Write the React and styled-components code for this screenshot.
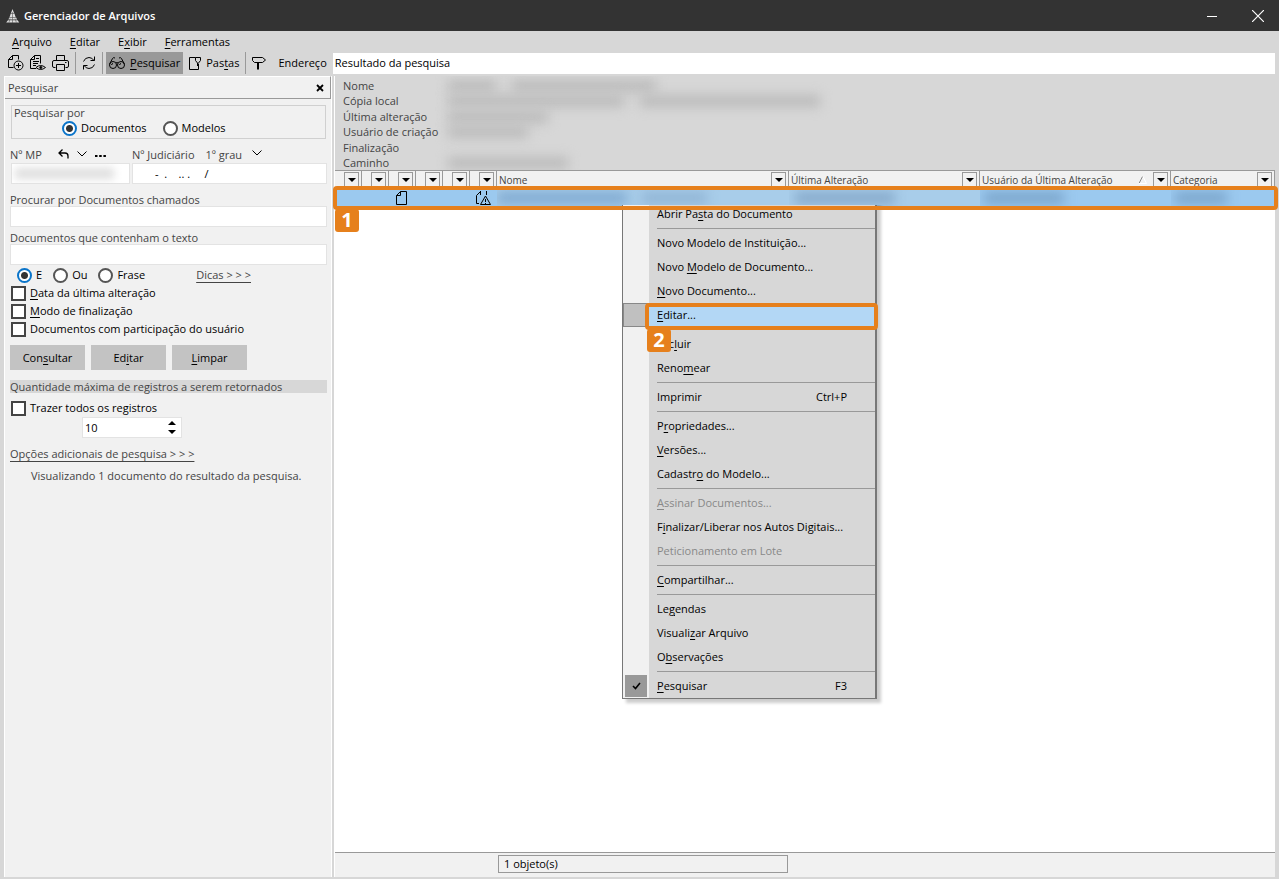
import { useState } from "react";
import styled, { createGlobalStyle, css } from "styled-components";

const GlobalStyle = createGlobalStyle`
    * {
        box-sizing: border-box;
    }
    body {
        margin: 0;
        background-color: #d7d7d7;
        font-family: "Open Sans", "Noto Sans", sans-serif;
        font-size: 11px;
        line-height: 16px;
        color: #000;
    }
    button, input, select {
        font: inherit;
        color: inherit;
        margin: 0;
        padding: 0;
        border: none;
        border-radius: 0;
        background: none;
    }
    u {
        text-underline-offset: 2px;
    }
`;

const Window = styled.div`
    min-height: 100vh;
    display: flex;
    flex-direction: column;
    background-color: #d7d7d7;
`;

/* title bar */
const TitleBar = styled.header`
    height: 31px;
    display: flex;
    align-items: center;
    padding: 0 12px 0 6px;
    background-color: #333;
    color: #fff;
`;
const Title = styled.h1`
    flex: 1;
    margin: 0 0 0 4px;
    font-size: 11px;
    font-weight: 600;
`;
const WindowButton = styled.button`
    width: 18px;
    height: 18px;
    margin-left: 28px;
    display: flex;
    align-items: center;
    justify-content: center;
`;

/* menu bar and tool bar */
const MenuBar = styled.nav`
    height: 21px;
    display: flex;
    align-items: center;
    gap: 18px;
    padding: 0 12px;
`;
const MenuButton = styled.button`
    height: 18px;
`;
const ToolBar = styled.div`
    height: 24px;
    display: flex;
    align-items: flex-start;
    padding: 0 4px 0 5px;
`;
const ToolButton = styled.button`
    height: 22px;
    display: flex;
    align-items: center;
    gap: 5px;
    padding: 0 3px 0 ${(props) => (props.$spaced ? 6 : 3)}px;
    background-color: ${(props) => (props.$active ? "#999" : "transparent")};
`;
const Separator = styled.div`
    width: 1px;
    height: 22px;
    margin: 0 3px;
    background-color: #999;
`;
const AddressLabel = styled.label`
    flex: 1;
    display: flex;
    align-items: center;
    gap: 6px;
    padding-left: 9px;
    height: 22px;
`;
const AddressInput = styled.input`
    flex: 1;
    min-width: 0;
    height: 21px;
    padding: 0 0 2px 2px;
    background-color: #fff;
`;

const Body = styled.div`
    flex: 1;
    display: flex;
    gap: 2px;
    padding: 0 4px 2px;
`;

/* search panel */
const Sidebar = styled.aside`
    width: 328px;
    flex-shrink: 0;
    display: flex;
    flex-direction: column;
    background-color: #f1f1f1;
    border-left: 1px solid #fff;
    border-right: 1px solid #fff;
`;
const SidebarHeader = styled.div`
    height: 23px;
    display: flex;
    align-items: center;
    justify-content: space-between;
    padding: 0 5px 0 3px;
    color: #444;
    border-top: 1px solid #fff;
    border-right: 1px solid #999;
    border-bottom: 1px solid #999;
`;
const CloseButton = styled.button`
    display: flex;
    padding: 1px;
`;
const SearchForm = styled.form`
    padding: 6px 4px 0 5px;
`;
const Group = styled.div`
    height: 34px;
    margin: 0 1px;
    padding-left: 2px;
    border: 1px solid #d0d0d0;
    color: #444;
`;
const GroupTitle = styled.div`
    height: 14px;
    line-height: 14px;
`;
const RadioRow = styled.div`
    display: flex;
    align-items: center;
    gap: ${(props) => props.$gap}px;
    padding-left: ${(props) => props.$indent}px;
`;
const RadioLabel = styled.label`
    display: flex;
    align-items: center;
    gap: 4px;
    color: #000;
`;
const Radio = styled.input.attrs({ type: "radio" })`
    appearance: none;
    width: 15px;
    height: 15px;
    border: 2px solid #555;
    border-radius: 50%;
    background-color: #fff;

    &:checked {
        border-color: #0a74c9;
        background: radial-gradient(circle, #333 3px, #fff 4px);
    }
`;
const CheckLabel = styled.label`
    height: 18px;
    display: flex;
    align-items: center;
    gap: 4px;
    padding-left: 1px;
`;
const Checkbox = styled.input.attrs({ type: "checkbox" })`
    appearance: none;
    width: 15px;
    height: 15px;
    border: 2px solid #444;
    background-color: #fff;

    &:checked {
        background-color: #444;
    }
`;
const NumberLabels = styled.div`
    display: flex;
    height: 16px;
    margin-top: 8px;
    color: #444;
`;
const NumberTools = styled.div`
    display: flex;
    align-items: center;
    gap: 8px;
    width: 74px;
    height: 14px;
`;
const IconButton = styled.button`
    display: flex;
`;
const DegreeSelect = styled.div`
    display: flex;
    align-items: flex-start;
    margin-left: 11px;

    select {
        appearance: none;
        width: 46px;
        height: 16px;
    }
    svg {
        margin-top: 3px;
    }
`;
const LabelText = styled.label`
    width: ${(props) => (props.$width ? props.$width + "px" : "auto")};
    height: 14px;
    display: block;
    color: #444;
`;
const NumberFields = styled.div`
    display: grid;
    grid-template-columns: 119px 1fr;
    gap: 2px;
    padding-left: 1px;
`;
const TextInput = styled.input`
    width: 100%;
    height: 21px;
    display: block;
    padding: 0 ${(props) => props.$indent || 2}px;
    background-color: #fff;
    border: 1px solid #e3e3e3;
    white-space: pre;
`;
const BlurredField = styled.div`
    position: relative;
    overflow: hidden;
`;
const FieldSmudge = styled.div`
    position: absolute;
    top: 5px;
    left: 4px;
    right: 16px;
    height: 11px;
    background-color: #dedede;
    filter: blur(4px);
`;
const Field = styled.div`
    margin-top: ${(props) => props.$top}px;
`;
const MatchRow = styled.div`
    display: flex;
    align-items: center;
    justify-content: space-between;
    height: 18px;
    margin-top: 1px;
    padding-right: 76px;
`;
const Link = styled.a`
    color: #444;
    text-underline-offset: 3px;
    text-decoration: underline;
`;
const Buttons = styled.div`
    display: flex;
    gap: 6px;
    margin: 7px 0 10px;
`;
const Button = styled.button`
    width: 75px;
    height: 25px;
    background-color: #c3c3c3;
`;
const SectionTitle = styled.div`
    height: 13px;
    line-height: 13px;
    margin-bottom: 6px;
    background-color: #d7d7d7;
    color: #444;
`;
const Spinner = styled.div`
    display: flex;
    align-items: center;
    width: 100px;
    height: 21px;
    margin-left: 72px;
    padding: 0 5px 0 2px;
    background-color: #fff;
    border: 1px solid #e3e3e3;

    input {
        flex: 1;
        min-width: 0;
        appearance: textfield;
    }
    input::-webkit-inner-spin-button {
        appearance: none;
    }
`;
const SpinButtons = styled.div`
    display: flex;
    flex-direction: column;
    gap: 5px;
`;
const Status = styled.p`
    margin: 6px 0 0 21px;
    color: #444;
`;

/* results */
const Results = styled.main`
    position: relative;
    flex: 1;
    min-width: 0;
    display: flex;
    flex-direction: column;
    border-left: 1px solid #fff;
    background-color: #fff;
`;
const Details = styled.dl`
    margin: 0;
    height: 94px;
    padding: 2px 8px 0;
    display: grid;
    grid-template-columns: 105px 1fr;
    grid-auto-rows: 15px 16px;
    line-height: 16px;
    background-color: #d7d7d7;
    color: #444;
    overflow: hidden;

    dd {
        margin: 0;
        display: flex;
        align-items: center;
        gap: 16px;
    }
`;
const Smudge = styled.span`
    width: ${(props) => props.$width}px;
    height: 12px;
    margin-left: ${(props) => props.$left || 0}px;
    background-color: ${(props) => props.$color || "#bbb"};
    filter: blur(6px);
`;
const Table = styled.table`
    width: 100%;
    table-layout: fixed;
    border-collapse: collapse;
    border-top: 1px solid #999;

    th, td {
        padding: 0;
        text-align: left;
        font-weight: 400;
    }
    th {
        height: 17px;
        color: #444;
        font-size: 10px;
        background-color: #f1f1f1;
        vertical-align: top;
    }
    td {
        height: 19px;
        background-color: #9bc9ef;
    }
`;
const HeaderCell = styled.div`
    display: flex;
    align-items: flex-start;
    height: 17px;
    padding: 1px 2px 0;
    border-right: 1px solid #999;

    span {
        flex: 1;
        min-width: 0;
        white-space: nowrap;
    }
`;
const FilterButton = styled.button`
    width: 15px;
    height: 16px;
    display: flex;
    align-items: center;
    justify-content: center;
    border: 1px solid #999;
    flex-shrink: 0;
`;
const SortMark = styled.svg`
    margin: 4px 6px 0 0;
`;
const CellContent = styled.div`
    display: flex;
    align-items: center;
    height: 19px;
    overflow: hidden;
    padding-left: ${(props) => props.$indent || 0}px;
    background-color: ${(props) => (props.$hazy ? "#a8cdea" : "transparent")};
`;
const FooterBar = styled.footer`
    margin-top: auto;
    height: 25px;
    display: flex;
    align-items: flex-start;
    padding: 2px 0 0 163px;
    background-color: #f1f1f1;
    border-top: 1px solid #999;
`;
const ObjectCount = styled.div`
    width: 290px;
    height: 18px;
    padding-left: 5px;
    border: 1px solid #999;
`;

/* context menu, its top edge tucked under the selected row */
const ContextMenu = styled.div`
    position: absolute;
    top: 125px;
    left: 287px;
    width: 255px;
    border: 1px solid #777;
    border-right-width: 2px;
    background: linear-gradient(to right, #f1f1f1 26px, #d7d7d7 26px);
    box-shadow: 4px 4px 3px rgba(0, 0, 0, 0.2);
    clip-path: inset(4px -8px -8px 0);
`;
const MenuItem = styled.button`
    width: 100%;
    height: 24px;
    display: flex;
    align-items: center;
    padding: 0 28px 0 2px;
    text-align: left;

    &:disabled {
        color: #888;
    }
    ${(props) =>
        props.$highlighted &&
        css`
            background: linear-gradient(to right, #c0c0c0 26px, #b3d7f5 26px);
            outline: 1px solid #888;
            outline-offset: -1px;
        `}
`;
const ItemMark = styled.span`
    width: 22px;
    height: 22px;
    margin-right: 10px;
    display: flex;
    align-items: center;
    justify-content: center;
    background-color: ${(props) => (props.$checked ? "#999" : "transparent")};
`;
const ItemLabel = styled.span`
    flex: 1;
`;
const Divider = styled.div`
    height: 5px;
    margin-left: 34px;
    background: linear-gradient(#999, #999) 0 2px / 100% 1px no-repeat;
`;

/* numbered callouts */
const Callout = styled.div`
    position: absolute;
    border: 4px solid #e6801c;
    border-radius: 4px;
    pointer-events: none;
`;
const RowCallout = styled(Callout)`
    top: 110px;
    left: -2px;
    right: -3px;
    height: 24px;
`;
const ItemCallout = styled(Callout)`
    top: 101px;
    left: 22px;
    right: -3px;
    height: 27px;
`;
const Badge = styled.span`
    position: absolute;
    top: calc(100% + 3px);
    left: -2px;
    width: 24px;
    height: 23px;
    line-height: 22px;
    border-radius: 3px;
    background-color: #e6801c;
    color: #fff;
    font-size: 20px;
    font-weight: 700;
    text-align: center;
`;

const Icon = ({ width = 16, height = 16, children }) => (
    <svg
        width={width}
        height={height}
        viewBox={`0 0 ${width} ${height}`}
        fill="none"
        stroke="#000"
        aria-hidden="true"
    >
        {children}
    </svg>
);

const Logo = () => (
    <svg width="14" height="14" viewBox="0 0 14 14" aria-hidden="true">
        <path d="M6.5 0 8 4H5zM4.8 4.6h3.6L9.6 8H3.6zM3.3 8.6h6.8l1 2H2.4zM2 11.2h9.6l1.6 2.3H.2z" fill="#e0e0e0" />
        <path d="M6.5 3v11M4 9.5l-1 4M9 9.5l1.4 4" stroke="#555" strokeWidth=".6" />
    </svg>
);

const FileAddIcon = () => (
    <Icon>
        <path d="M5.5 12.5h-5v-8l4-4h6v4M4.5.5v4h-4" />
        <circle cx="10.5" cy="10.5" r="4.5" />
        <path d="M8 10.5h5M10.5 8v5" />
    </Icon>
);
const FileViewIcon = () => (
    <Icon>
        <path d="M6 13.5H.5v-9l4-4h6v8M4.5.5v4h-4M6 3.5h3M3 6.5h6M3 8.5h5M3 10.5h3" />
        <path d="M6 12.5q4.5-4 9.5 0-5 4-9.5 0z" />
        <circle cx="10.8" cy="12.5" r="1" fill="#000" />
    </Icon>
);
const PrinterIcon = () => (
    <Icon width={17}>
        <path d="M4.5 5V.5h8V5M3.5 12.5H2Q.5 12.500.5 11V7Q.5 5.500 2 5.500h13q1.500 0 1.500 1.500v4q0 1.500-1.500 1.500h-1.500" />
        <path d="M4.5 9.5h8v6h-8zM13 7.500h1.500" />
    </Icon>
);
const RefreshIcon = () => (
    <Icon width={14} height={14}>
        <path d="M1.5 5.5Q3 1.5 7 1.5q3 0 5 3M12.5.5v4h-4M12.5 8.5Q11 12.5 7 12.5q-3 0-5-3M1.5 13.5v-4h4" />
    </Icon>
);
const BinocularsIcon = () => (
    <Icon width={16} height={14}>
        <circle cx="4" cy="9" r="3.5" />
        <circle cx="12" cy="9" r="3.5" />
        <path d="M.7 8 3.5 2.500Q4.500 1 6 2M15.300 8 12.500 2.500Q11.500 1 10 2M7 7q1-1 2 0M2.500 9q.2-1.300 1.500-1.500M10.500 9q.2-1.300 1.500-1.500" />
    </Icon>
);
const FoldersIcon = () => (
    <Icon width={12} height={13}>
        <path d="M6.5.5h-6v12h9v-6M6.5.5v3l2 2.5v3M6.5.5h5v3l-2 2.500" />
    </Icon>
);
const SignIcon = () => (
    <Icon width={14} height={14}>
        <path d="M.5 1.5h10l3 2.5-3 2.5h-8l-2-2zM5.5 6.5v7M6.5 6.5v7" />
    </Icon>
);
const UndoIcon = () => (
    <Icon width={11} height={10}>
        <path d="M4.5.5 1 4l3.5 3.5M1 4h6q3 0 3 3v2.5" strokeWidth="1.3" />
    </Icon>
);
const ChevronIcon = () => (
    <Icon width={10} height={6}>
        <path d="M.5.5 5 5 9.5.5" />
    </Icon>
);
const ArrowIcon = ({ up }) => (
    <svg width="8" height="4" viewBox="0 0 8 4" aria-hidden="true">
        <path d={up ? "M0 4h8L4 0z" : "M0 0h8L4 4z"} />
    </svg>
);

// "&" marks the access key of a caption
const Caption = ({ text }) => {
    const [before, after] = text.split("&");
    if (after === undefined) return text;
    return (
        <>
            {before}
            <u>{after[0]}</u>
            {after.slice(1)}
        </>
    );
};

const contextItems = [
    { text: "Abrir Pa&sta do Documento" },
    null,
    { text: "Novo Modelo de Instituição..." },
    { text: "Novo &Modelo de Documento..." },
    { text: "&Novo Documento..." },
    { text: "&Editar...", highlighted: true },
    null,
    { text: "Exc&luir" },
    { text: "Reno&mear" },
    null,
    { text: "Imprimir", shortcut: "Ctrl+P" },
    null,
    { text: "P&ropriedades..." },
    { text: "&Versões..." },
    { text: "Cadastr&o do Modelo..." },
    null,
    { text: "&Assinar Documentos...", disabled: true },
    { text: "F&inalizar/Liberar nos Autos Digitais..." },
    { text: "Peticionamento em Lote", disabled: true },
    null,
    { text: "&Compartilhar..." },
    null,
    { text: "Le&gendas" },
    { text: "Visuali&zar Arquivo" },
    { text: "O&bservações" },
    null,
    { text: "&Pesquisar", shortcut: "F3", checked: true },
];

const details = [
    { label: "Nome", smudges: [48, 144] },
    { label: "Cópia local", smudges: [176, 180] },
    { label: "Última alteração", smudges: [100] },
    { label: "Usuário de criação", smudges: [80] },
    { label: "Finalização", smudges: [] },
    { label: "Caminho", smudges: [120] },
];

const columns = [
    { width: 27 },
    { width: 27 },
    { width: 27 },
    { width: 27 },
    { width: 27 },
    { width: 27 },
    { title: "Nome", width: 292 },
    { title: "Última Alteração", width: 191 },
    { title: "Usuário da Última Alteração", width: 191, sorted: true },
    { title: "Categoria" },
];

const filters = ["&Data da última alteração", "&Modo de finalização", "Documentos com participação do usuário"];

const SearchPanel = () => {
    const [kind, setKind] = useState("Documentos");
    const [match, setMatch] = useState("E");
    const [limit, setLimit] = useState(10);

    return (
        <Sidebar>
            <SidebarHeader>
                Pesquisar
                <CloseButton aria-label="Fechar painel">
                    <Icon width={8} height={8}>
                        <path d="M1 1l6 6M7 1 1 7" strokeWidth="1.8" />
                    </Icon>
                </CloseButton>
            </SidebarHeader>
            <SearchForm onSubmit={(e) => e.preventDefault()}>
                <Group>
                    <GroupTitle>Pesquisar por</GroupTitle>
                    <RadioRow $gap={16} $indent={48}>
                        {["Documentos", "Modelos"].map((name) => (
                            <RadioLabel key={name}>
                                <Radio name="kind" checked={kind === name} onChange={() => setKind(name)} />
                                {name}
                            </RadioLabel>
                        ))}
                    </RadioRow>
                </Group>
                <NumberLabels>
                    <LabelText htmlFor="mp" $width={48}>Nº MP</LabelText>
                    <NumberTools>
                        <IconButton type="button" aria-label="Desfazer"><UndoIcon /></IconButton>
                        <IconButton type="button" aria-label="Recentes"><ChevronIcon /></IconButton>
                        <IconButton type="button" aria-label="Mais">
                            <Icon width={11} height={10}>
                                <path d="M0 7h2.500M4.200 7h2.500M8.400 7h2.500" strokeWidth="2" />
                            </Icon>
                        </IconButton>
                    </NumberTools>
                    <LabelText htmlFor="judicial">Nº Judiciário</LabelText>
                    <DegreeSelect>
                        <select aria-label="Grau">
                            <option>1º grau</option>
                        </select>
                        <ChevronIcon />
                    </DegreeSelect>
                </NumberLabels>
                <NumberFields>
                    <BlurredField>
                        <TextInput id="mp" />
                        <FieldSmudge />
                    </BlurredField>
                    <TextInput id="judicial" $indent={22} defaultValue="-  .    .. .     /" />
                </NumberFields>
                <Field $top={8}>
                    <LabelText htmlFor="called">Procurar por Documentos chamados</LabelText>
                    <TextInput id="called" />
                </Field>
                <Field $top={3}>
                    <LabelText htmlFor="contains">Documentos que contenham o texto</LabelText>
                    <TextInput id="contains" />
                </Field>
                <MatchRow>
                    <RadioRow $gap={11} $indent={7}>
                        {["E", "Ou", "Frase"].map((name) => (
                            <RadioLabel key={name}>
                                <Radio name="match" checked={match === name} onChange={() => setMatch(name)} />
                                {name}
                            </RadioLabel>
                        ))}
                    </RadioRow>
                    <Link href="#dicas">Dicas &gt; &gt; &gt;</Link>
                </MatchRow>
                {filters.map((name) => (
                    <CheckLabel key={name}>
                        <Checkbox />
                        <span><Caption text={name} /></span>
                    </CheckLabel>
                ))}
                <Buttons>
                    <Button type="submit"><Caption text="Con&sultar" /></Button>
                    <Button type="button"><Caption text="Ed&itar" /></Button>
                    <Button type="reset"><Caption text="&Limpar" /></Button>
                </Buttons>
                <SectionTitle>Quantidade máxima de registros a serem retornados</SectionTitle>
                <CheckLabel>
                    <Checkbox />
                    Trazer todos os registros
                </CheckLabel>
                <Spinner>
                    <input
                        type="number"
                        aria-label="Quantidade"
                        value={limit}
                        onChange={(e) => setLimit(Number(e.target.value))}
                    />
                    <SpinButtons>
                        <IconButton type="button" aria-label="Aumentar" onClick={() => setLimit(limit + 1)}>
                            <ArrowIcon up />
                        </IconButton>
                        <IconButton type="button" aria-label="Diminuir" onClick={() => setLimit(limit - 1)}>
                            <ArrowIcon />
                        </IconButton>
                    </SpinButtons>
                </Spinner>
                <Field $top={8}>
                    <Link href="#opcoes">Opções adicionais de pesquisa &gt; &gt; &gt;</Link>
                </Field>
                <Status>Visualizando 1 documento do resultado da pesquisa.</Status>
            </SearchForm>
        </Sidebar>
    );
};

const DetailRow = ({ label, smudges }) => (
    <>
        <dt>{label}</dt>
        <dd>
            {smudges.map((width, i) => (
                <Smudge key={i} $width={width} />
            ))}
        </dd>
    </>
);

const ResultTable = () => (
    <Table>
        <colgroup>
            {columns.map((column, i) => (
                <col key={i} width={column.width} />
            ))}
        </colgroup>
        <thead>
            <tr>
                {columns.map((column, i) => (
                    <th key={i}>
                        <HeaderCell>
                            <span>{column.title}</span>
                            {column.sorted && (
                                <SortMark width="8" height="8" viewBox="0 0 8 8">
                                    <path d="M0 7.5 3.5.5" stroke="#888" />
                                    <path d="M4 .5 7.5 7.5H0" stroke="#fff" fill="none" />
                                </SortMark>
                            )}
                            <FilterButton aria-label="Filtrar">
                                <ArrowIcon />
                            </FilterButton>
                        </HeaderCell>
                    </th>
                ))}
            </tr>
        </thead>
        <tbody>
            <tr>
                <td />
                <td />
                <td>
                    <CellContent $indent={7}>
                        <Icon width={12} height={14}>
                            <path d="M4.5.5h6v13H.5v-9zM4.5.5v4h-4" />
                        </Icon>
                    </CellContent>
                </td>
                <td />
                <td />
                <td>
                    <CellContent $indent={6}>
                        <Icon width={15} height={14}>
                            <path d="M3 12.5H.5v-8l4-4M4.5 0v4M10.5 0v4M4.5 13.5l5-8.5 5 8.500z" />
                            <path d="M9.5 8v3M9.5 12v1" />
                        </Icon>
                    </CellContent>
                </td>
                <td>
                    <CellContent $hazy>
                        <Smudge $width={130} $color="#7fa9d0" />
                        <Smudge $width={65} $left={15} $color="#90b4d4" />
                    </CellContent>
                </td>
                <td>
                    <CellContent $hazy>
                        <Smudge $width={100} $left={6} $color="#85a8c9" />
                    </CellContent>
                </td>
                <td>
                    <CellContent>
                        <Smudge $width={80} $left={4} $color="#7aa4ca" />
                    </CellContent>
                </td>
                <td>
                    <CellContent>
                        <Smudge $width={52} $left={4} $color="#7aa4ca" />
                    </CellContent>
                </td>
            </tr>
        </tbody>
    </Table>
);

const App = () => {
    return (
        <Window>
            <GlobalStyle />
            <TitleBar>
                <Logo />
                <Title>Gerenciador de Arquivos</Title>
                <WindowButton aria-label="Minimizar">
                    <svg width="10" height="12"><path d="M0 6.5h10" stroke="#fff" /></svg>
                </WindowButton>
                <WindowButton aria-label="Fechar">
                    <svg width="12" height="12"><path d="M0 0l12 12M12 0 0 12" stroke="#fff" strokeWidth="1.2" /></svg>
                </WindowButton>
            </TitleBar>
            <MenuBar>
                {["&Arquivo", "&Editar", "E&xibir", "&Ferramentas"].map((name) => (
                    <MenuButton key={name}><Caption text={name} /></MenuButton>
                ))}
            </MenuBar>
            <ToolBar>
                <ToolButton aria-label="Novo"><FileAddIcon /></ToolButton>
                <ToolButton aria-label="Visualizar"><FileViewIcon /></ToolButton>
                <ToolButton aria-label="Imprimir"><PrinterIcon /></ToolButton>
                <Separator />
                <ToolButton aria-label="Atualizar"><RefreshIcon /></ToolButton>
                <Separator />
                <ToolButton $active>
                    <BinocularsIcon />
                    <span><Caption text="&Pesquisar" /></span>
                </ToolButton>
                <ToolButton $spaced>
                    <FoldersIcon />
                    <span><Caption text="Pas&tas" /></span>
                </ToolButton>
                <Separator />
                <ToolButton aria-label="Ir para"><SignIcon /></ToolButton>
                <AddressLabel>
                    Endereço
                    <AddressInput defaultValue="Resultado da pesquisa" />
                </AddressLabel>
            </ToolBar>
            <Body>
                <SearchPanel />
                <Results>
                    <Details>
                        {details.map(({ label, smudges }) => (
                            <DetailRow key={label} label={label} smudges={smudges} />
                        ))}
                    </Details>
                    <ResultTable />
                    <ContextMenu role="menu">
                        {contextItems.map((item, i) =>
                            item ? (
                                <MenuItem
                                    key={i}
                                    role="menuitem"
                                    disabled={item.disabled}
                                    $highlighted={item.highlighted}
                                >
                                    <ItemMark $checked={item.checked}>
                                        {item.checked && (
                                            <Icon width={9} height={8}>
                                                <path d="M1 4l2.5 2.5L8 1" strokeWidth="1.6" />
                                            </Icon>
                                        )}
                                    </ItemMark>
                                    <ItemLabel><Caption text={item.text} /></ItemLabel>
                                    {item.shortcut}
                                </MenuItem>
                            ) : (
                                <Divider key={i} />
                            )
                        )}
                        <ItemCallout>
                            <Badge>2</Badge>
                        </ItemCallout>
                    </ContextMenu>
                    <RowCallout>
                        <Badge>1</Badge>
                    </RowCallout>
                    <FooterBar>
                        <ObjectCount>1 objeto(s)</ObjectCount>
                    </FooterBar>
                </Results>
            </Body>
        </Window>
    );
};

export default App;
